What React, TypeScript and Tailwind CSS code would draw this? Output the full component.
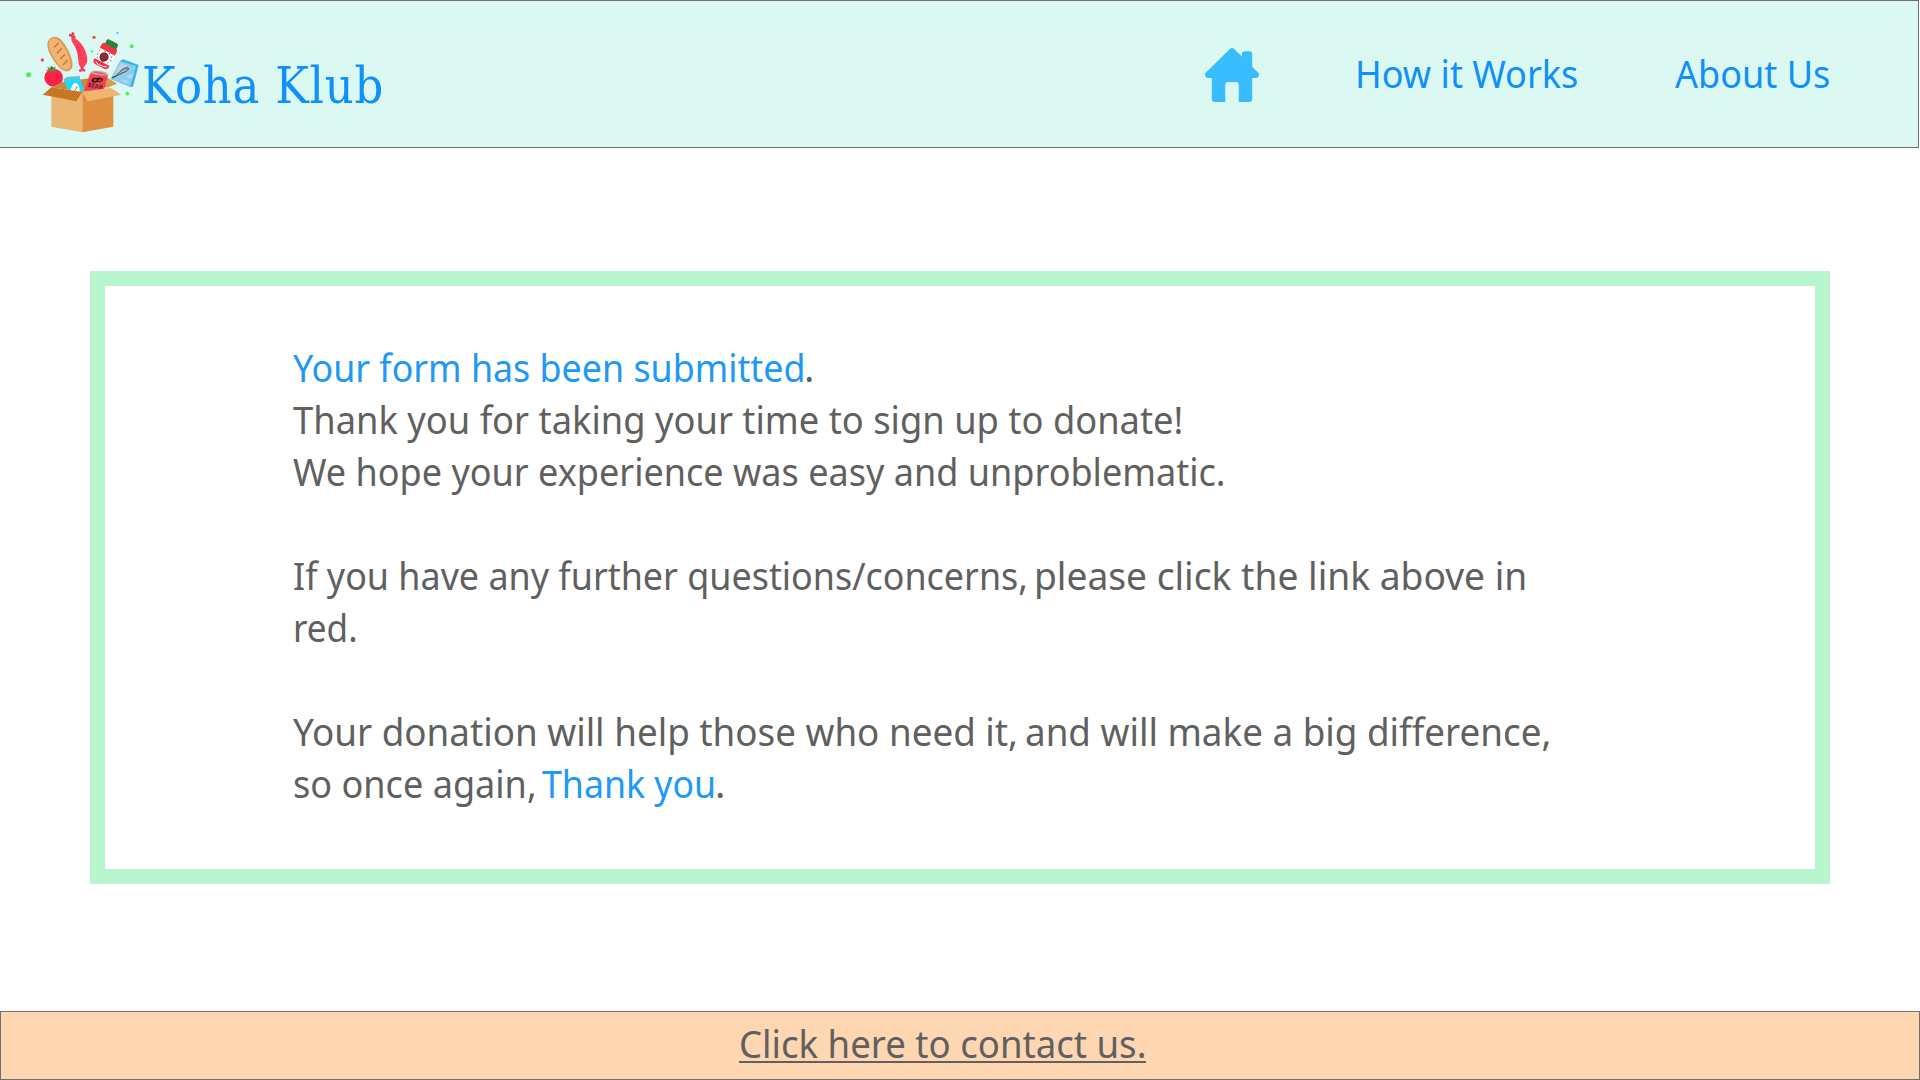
import type { ReactNode } from 'react';

const fit = 'block origin-left whitespace-nowrap';

function Line({ children }: { children?: ReactNode }) {
  return <div className="flex h-[52px]">{children}</div>;
}

function BoxLogo() {
  return (
    <svg className="h-[104px] w-[116px] shrink-0" viewBox="72 90 348 312" aria-hidden="true">
      {/* confetti */}
      <g fill="#4df04a">
        <circle cx="86" cy="224" r="7.5" />
        <circle cx="395" cy="139" r="6" />
        <circle cx="382" cy="281" r="5.5" />
        <circle cx="276" cy="154" r="3.5" />
      </g>
      <circle cx="127" cy="180" r="5" fill="#f0425d" />
      <circle cx="282" cy="112" r="5" fill="#f0425d" />
      <circle cx="352" cy="99" r="3.5" fill="#45cdf2" />
      {/* bread */}
      <g transform="translate(181 163) rotate(-29)">
        <path d="M0-57C18-57 27-38 27-8C27 25 20 56 0 56C-20 56-27 25-27-8C-27-38-18-57 0-57Z" fill="#dc9850" />
        <path d="M-2-53C14-53 21-35 21-8C21 23 15 50-1 50C-18 50-22 23-22-8C-22-35-16-53-2-53Z" fill="#f2b474" />
        <g stroke="#bd7737" strokeWidth="4" strokeLinecap="round">
          <path d="M-5-28L11-32M-6-8L11-13M-6 12L11 7M-6 31L9 26" />
        </g>
      </g>
      {/* sausage */}
      <path d="M218 112C242 122 262 151 262 181C261 194 253 202 246 202C237 202 236 191 235 180C233 155 226 140 218 129C212 119 212 114 218 112Z" fill="#ff405c" />
      <path d="M207 102L215 102L217 95L223 99L223 106L228 113L219 118L214 111L207 109ZM242 198L251 200L251 207L257 209L254 216L248 213L239 217L236 210L242 207Z" fill="#f43e57" />
      <path d="M229 133l6 3M230 143l8 0M235 153l7-2M237 164l8 0M240 174l7-2" stroke="#a9344a" strokeWidth="2" />
      {/* jar */}
      <g transform="translate(318 164) rotate(27)">
        <rect x="-26" y="-31" width="51" height="71" rx="11" fill="#fa3046" />
        <rect x="-18" y="-45" width="38" height="18" rx="6" fill="#2f8038" />
        <path d="M-27-10H26V25H-27Z" fill="#fff" />
        <path d="M-23-5v5m0 7v5m3 5v4M18-4v5m3 6v5m-5 5v4M-9-7h6M5-7h5M-5 23h7" stroke="#343436" strokeWidth="2" />
        <circle cx="-2" cy="9" r="13.5" fill="#32212a" />
        <circle cx="-2" cy="9" r="11" fill="#9c2830" />
        <path d="M-18 33C-8 37 8 37 18 31" stroke="#fff" strokeWidth="3" fill="none" />
      </g>
      {/* frozen packet */}
      <path d="M361 182L370 178L416 195L399 260L392 261L332 237Z" fill="#39b4e7" />
      <path d="M361 184L408 198L391 259L332 237Z" fill="#8ccdec" />
      <path d="M363 188L383 195L348 230L340 228ZM380 227l21-7-5 15-13-2zM362 240l22 2-3 9z" fill="#b9d4e2" />
      <path d="M337 232C351 230 354 216 370 207C380 201 388 204 385 207C380 216 369 217 359 223C350 228 345 230 337 234" fill="#aab3bd" stroke="#26343f" strokeWidth="2.5" />
      {/* tomato */}
      <ellipse cx="161" cy="233" rx="28" ry="27" fill="#ff2148" />
      <path d="M159 212L152 219L150 211L137 213L146 206L140 201L151 203L154 197L158 204L168 200L164 209L174 213L163 212L164 222Z" fill="#63912a" />
      <path d="M155 207L153 198L161 204Z" fill="#315d20" />
      {/* box interior, milk and can */}
      <path d="M154 262L188 246L315 228L350 252L310 264L247 276Z" fill="#c88a3e" />
      <path d="M191 239L238 230L253 274L203 270Z" fill="#20d9fa" />
      <path d="M190 238L202 230L240 228L239 234L195 241Z" fill="#70bfd2" />
      <path d="M211 269C216 263 215 252 225 249C233 249 240 257 239 276L218 272Z" fill="#fff" />
      <path d="M224 272q7-7 7-13" stroke="#1786a0" strokeWidth="3" fill="none" />
      <path d="M271 219L324 226L312 270L252 274Z" fill="#f64057" />
      <path d="M271 219Q274 208 300 213Q325 216 324 225Q302 232 271 219Z" fill="#c1ad9e" />
      <path d="M276 217Q299 210 319 224Q296 225 276 217Z" fill="#e8647b" />
      <path d="M274 244Q276 231 289 234Q303 230 310 238Q305 251 293 245Q281 252 274 244Z" fill="#2d1a1e" />
      <path d="M280 241Q284 234 291 239Q286 247 280 241ZM294 242Q301 234 305 239Q302 247 294 242Z" fill="#c64632" />
      <path d="M269 248l-3 13m1-12q8 1 6 5q-1 2-6 1q7 2 4 6l-5-1m12-10l-2 13 7 1m-4-13 6 1m-7 5 5 1m1 7 8-13 3 14m-8-4 6 0m6 5 2-13 4 13 2-12" stroke="#5b1c2c" strokeWidth="2.5" fill="none" />
      {/* carton */}
      <path d="M154 278L247 275V397L154 380Z" fill="#e9b771" />
      <path d="M247 275L340 281V380L247 397Z" fill="#de9040" />
      <path d="M154 262L247 276L229 304L128 284Z" fill="#c87622" />
      <path d="M247 276L332 263L364 284L263 304Z" fill="#f1b471" />
      <path d="M323 235L350 250L322 264L317 250Z" fill="#dc9b50" />
    </svg>
  );
}

function HomeIcon() {
  return (
    <svg className="h-[54px] w-[54px]" viewBox="0 0 54 54" fill="#38bdff" aria-hidden="true">
      <path d="M24.8 1Q27 -.9 29.2 1L37 8.6V6Q37 3.2 39.8 3.2H44.4Q47.2 3.2 47.2 6V18.8L53 24.6Q54 25.7 54 27Q53.8 30 50.6 30H47.2V51Q47.2 54 44.2 54H33.8V37Q33.8 34 30.8 34H23.2Q20.2 34 20.2 37V54H9.8Q6.8 54 6.8 51V30H3.4Q.2 30 0 27Q0 25.7 1 24.6Z" />
    </svg>
  );
}

export default function App() {
  return (
    <div className="flex h-[1080px] w-[1920px] flex-col overflow-hidden bg-white font-['Noto_Sans',sans-serif] text-[39px] leading-[52px] text-[#606060]">
      <header className="flex h-[148px] w-[1919px] shrink-0 border-y border-r border-[#707070] bg-[#dcf8f2] text-[#1090fa]">
        <a className="flex w-[1205px] pl-6 pt-[29px]">
          <BoxLogo />
          <span className="ml-[2px] mt-[25.5px] whitespace-nowrap font-['DejaVu_Serif',serif] text-[50px] leading-[60px] tracking-[0.75px] [font-stretch:condensed]">
            Koha Klub
          </span>
        </a>
        <nav className="flex pt-[46px]">
          <a className="mt-px w-[150px]"><HomeIcon /></a>
          <a className="w-[320px]"><span className={`${fit} w-[241px] scale-x-[0.925]`}>How it Works</span></a>
          <a><span className={`${fit} w-[168px] scale-x-[0.924]`}>About Us</span></a>
        </nav>
      </header>

      <main className="mx-[90px] mt-[123px] h-[613px] shrink-0 border-[15px] border-[#b8f5cf] pl-[188px] pt-[55px]">
        <Line>
          <span className={`${fit} w-[511px] scale-x-[0.918] text-[#2098f8]`}>Your form has been submitted</span>
          <span>.</span>
        </Line>
        <Line><span className={`${fit} w-[894px] scale-x-[0.931]`}>Thank you for taking your time to sign up to donate!</span></Line>
        <Line><span className={`${fit} w-[934px] scale-x-[0.924]`}>We hope your experience was easy and unproblematic.</span></Line>
        <Line />
        <Line>
          <span className={`${fit} w-[741px] scale-x-[0.92]`}>If you have any further questions/concerns,</span>
          <span className={`${fit} scale-x-[0.953]`}>please click the link above in</span>
        </Line>
        <Line><span className={`${fit} scale-x-[0.9]`}>red.</span></Line>
        <Line />
        <Line>
          <span className={`${fit} w-[732px] scale-x-[0.943]`}>Your donation will help those who need it,</span>
          <span className={`${fit} scale-x-[0.943]`}>and will make a big difference,</span>
        </Line>
        <Line>
          <span className={`${fit} w-[249px] scale-x-[0.925]`}>so once again,</span>
          <span className={`${fit} w-[173px] scale-x-[0.915] text-[#2098f8]`}>Thank you</span>
          <span>.</span>
        </Line>
      </main>

      <footer className="mt-[127px] flex h-[69px] shrink-0 border border-[#707070] bg-[#ffd6b2] pl-[738px] pt-[5px]">
        <a className="h-[46px] w-[407px] border-b-2 border-[#606060]">
          <span className={`${fit} w-[434px] scale-x-[0.938]`}>Click here to contact us.</span>
        </a>
      </footer>
    </div>
  );
}
